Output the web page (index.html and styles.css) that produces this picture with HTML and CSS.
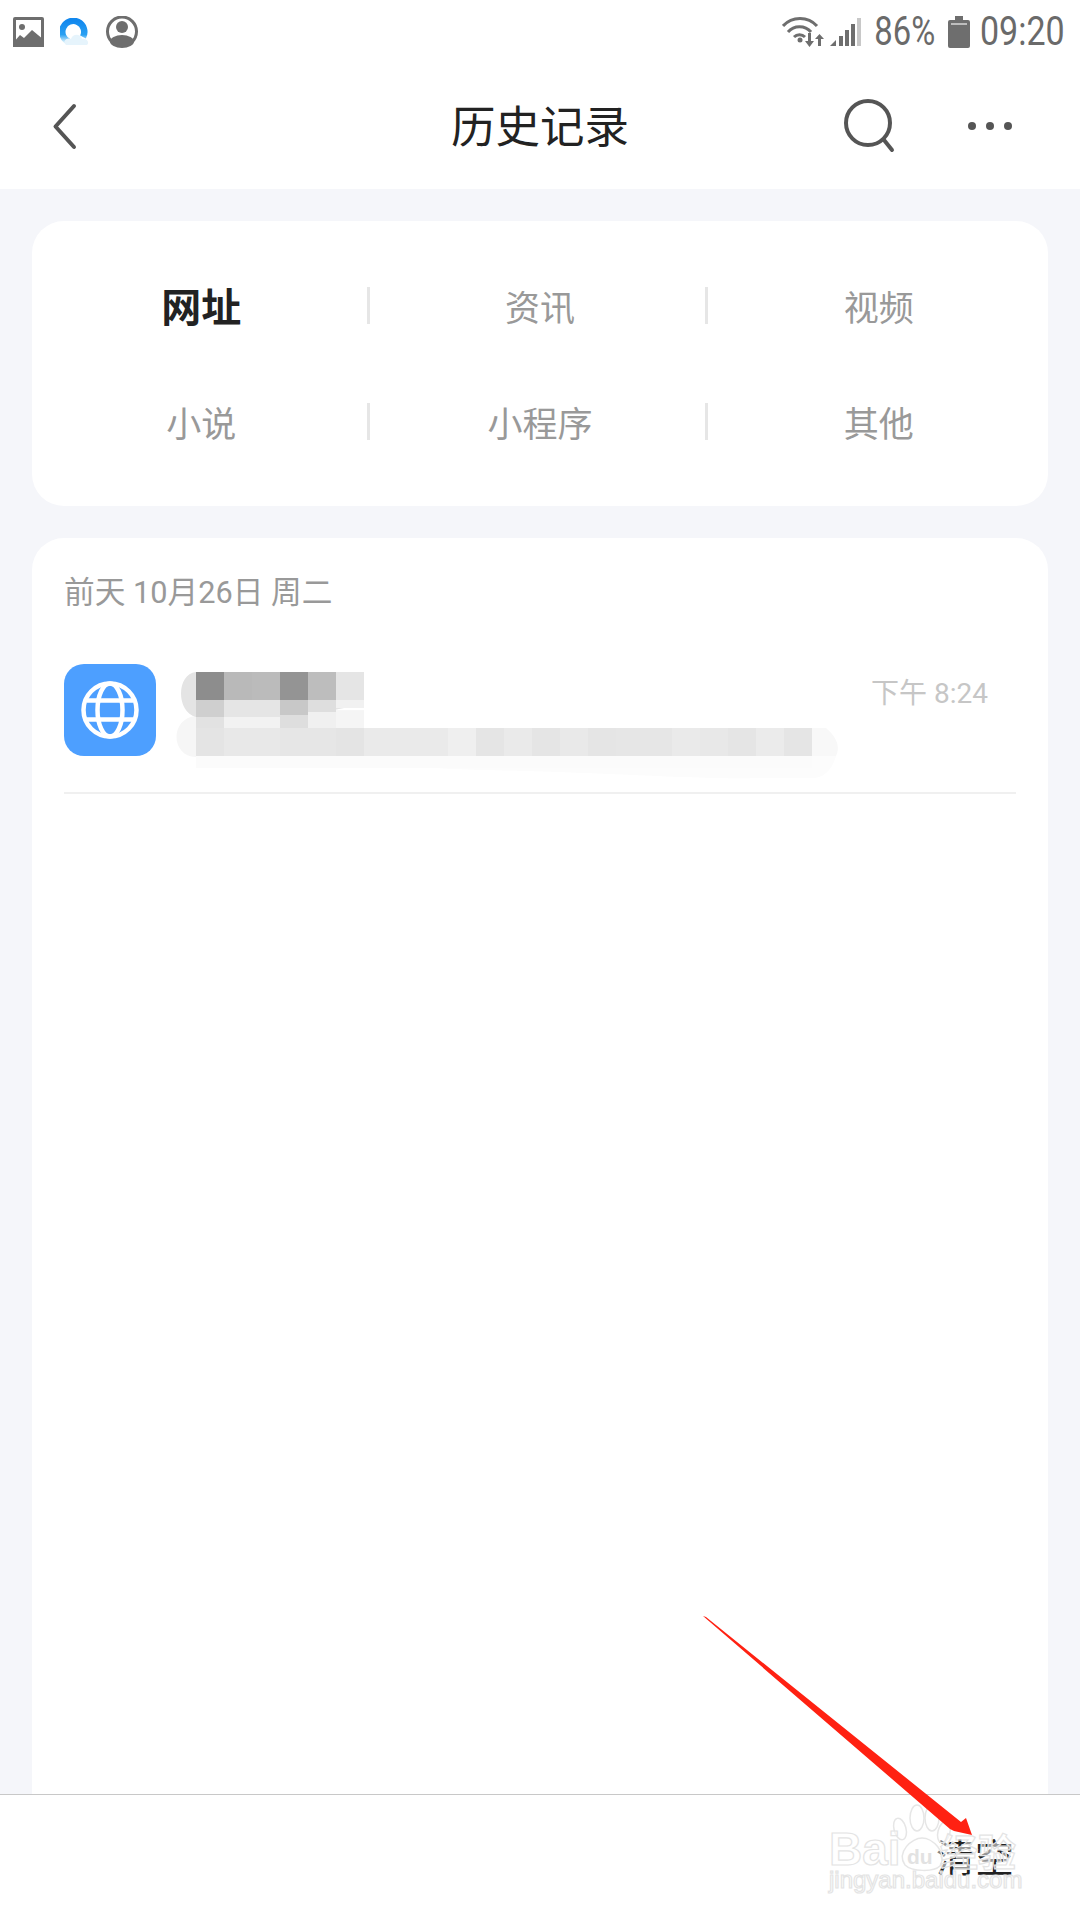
FILE: index.html
```html
<!DOCTYPE html>
<html lang="zh-CN">
<head>
<meta charset="utf-8">
<title>历史记录</title>
<link rel="stylesheet" href="styles.css">
</head>
<body>
<div class="page">
  <header class="header">
    <div class="status">
      <div class="status-left">
        <svg width="31" height="30" viewBox="13 17 31 30"><rect x="13" y="17" width="31" height="30" rx="2" fill="#6e6e6e"/><rect x="16" y="20" width="25" height="22" fill="#fff"/><circle cx="22" cy="27" r="3" fill="#6e6e6e"/><path d="M13 43 L20 35 L24 38 L32 30 L44 40 V47 H13 Z" fill="#6e6e6e"/></svg>
        <svg width="30" height="28" viewBox="61 17 30 28"><defs><linearGradient id="ring" x1="0" y1="0" x2="0" y2="1"><stop offset="0" stop-color="#1288ee"/><stop offset=".65" stop-color="#2aa0f2"/><stop offset="1" stop-color="#d8f0fb"/></linearGradient></defs><path d="M84 36 A11 11 0 1 0 70 41" fill="none" stroke="url(#ring)" stroke-width="6.500"/><path d="M67 44 C63 40 68 36 72 38 C74 32 82 33 83 38 C88 37 91 42 88 44 Z" fill="#e6f4fc"/></svg>
        <svg width="32" height="32" viewBox="106 16 32 32"><path d="M112 42 A14.5 14.5 0 1 1 132 42" fill="none" stroke="#6e6e6e" stroke-width="3"/><circle cx="122" cy="27" r="6" fill="#6e6e6e"/><ellipse cx="122" cy="41.500" rx="12" ry="6.500" fill="#6e6e6e"/></svg>
      </div>
      <div class="status-right">
        <svg class="wifi" width="44" height="34" viewBox="783 15 44 34"><g fill="none" stroke="#6e6e6e" stroke-width="3"><path d="M784 26 C793 16 809 16 818 26"/><path d="M789 32 C795 25 806 25 812 32"/><path d="M795 37 C798 34 803 34 806 37"/></g><circle cx="801" cy="40" r="2.500" fill="#6e6e6e"/><path d="M809 33 H812 V41 H815 L810.500 47 L806 41 H809 Z M819 46 H822 V39 H825 L820.500 34 L816 39 H819 Z" fill="#6e6e6e"/></svg>
        <svg width="32" height="30" viewBox="831 19 32 30"><path d="M831 48 L837 42 V48 Z" fill="#6e6e6e"/><rect x="840" y="38" width="4" height="10" fill="#6e6e6e"/><rect x="846" y="32" width="4" height="16" fill="#6e6e6e"/><rect x="852" y="26" width="4" height="22" fill="#6e6e6e"/><rect x="858" y="20" width="4" height="28" fill="#c8c8c8"/></svg>
        <span class="status-text pct"><span class="condensed">86%</span></span>
        <svg width="22" height="32" viewBox="948 16 22 32"><path d="M955 16 H963 V20 H968 A2 2 0 0 1 970 22 V46 A2 2 0 0 1 968 48 H950 A2 2 0 0 1 948 46 V22 A2 2 0 0 1 950 20 H955 Z" fill="#6e6e6e"/><rect x="951" y="23" width="16" height="2" fill="#bdbdbd"/></svg>
        <span class="status-text clock"><span class="condensed">09:20</span></span>
      </div>
    </div>
    <nav class="nav">
      <div class="nav-left">
        <svg width="26" height="49" viewBox="51 102 26 49"><path d="M74 106 L55.500 126.500 L74 147" fill="none" stroke="#555" stroke-width="4" stroke-linecap="round" stroke-linejoin="round"/></svg>
      </div>
      <h1 class="title">历史记录</h1>
      <div class="nav-right">
        <svg width="54" height="56" viewBox="842 97 54 56"><circle cx="868" cy="122" r="22" fill="none" stroke="#555" stroke-width="4"/><path d="M884 139 L892 149" stroke="#555" stroke-width="4" stroke-linecap="round"/></svg>
        <svg width="46" height="10" viewBox="967 120 46 10"><circle cx="972" cy="125" r="4" fill="#555"/><circle cx="990" cy="125" r="4" fill="#555"/><circle cx="1008" cy="125" r="4" fill="#555"/></svg>
      </div>
    </nav>
  </header>

  <main class="main">
    <section class="card tabs">
      <div class="tab tab-active">网址</div>
      <div class="tab tab-sep">资讯</div>
      <div class="tab tab-sep">视频</div>
      <div class="tab">小说</div>
      <div class="tab tab-sep">小程序</div>
      <div class="tab tab-sep">其他</div>
    </section>

    <section class="card history">
      <div class="date">前天 10月26日 周二</div>
      <div class="row">
        <div class="app-icon">
          <svg width="64" height="64" viewBox="78 678 64 64"><g fill="none" stroke="#fff" stroke-width="4.500"><circle cx="110" cy="710" r="26.500"/><ellipse cx="110" cy="710" rx="12.500" ry="26.500"/><path d="M87 700.500 H133 M87 719.500 H133"/></g></svg>
        </div>
        <svg class="mosaic" width="665" height="92" viewBox="175 664 665 92">
          <path d="M196 756 V768 H280 C350 765 440 768 480 770 C600 772 700 780 760 778 H812 C824 778 832 770 836 756 Z" fill="#fcfcfc"/>
          <path d="M812 728 H826 C838 738 840 748 836 756 H812 Z" fill="#f8f8f8"/>
          <path d="M196 716 C170 718 170 756 196 757 H364 V710 H240 Z" fill="#f6f6f6"/>
          <path d="M196 672 C176 674 176 712 196 717 C230 722 290 718 320 714 C340 708 350 707 364 705 V672 Z" fill="#e4e4e4"/>
          <g>
            <rect x="196" y="672" width="28" height="28" fill="#8d8d8d"/><rect x="224" y="672" width="28" height="28" fill="#b9b9b9"/><rect x="252" y="672" width="28" height="28" fill="#bbb"/><rect x="280" y="672" width="28" height="28" fill="#949494"/><rect x="308" y="672" width="28" height="28" fill="#bdbdbd"/><rect x="336" y="672" width="28" height="28" fill="#e5e5e5"/>
            <rect x="196" y="700" width="28" height="17" fill="#cfcfcf"/><rect x="224" y="700" width="56" height="17" fill="#e5e5e5"/><rect x="280" y="700" width="28" height="15" fill="#c8c8c8"/><rect x="308" y="700" width="28" height="12" fill="#dedede"/><rect x="336" y="700" width="28" height="8" fill="#f1f1f1"/>
            <rect x="196" y="717" width="28" height="11" fill="#e2e2e2"/><rect x="224" y="717" width="56" height="11" fill="#f2f2f2"/><rect x="280" y="715" width="28" height="13" fill="#dedede"/><rect x="308" y="712" width="28" height="16" fill="#f0f0f0"/><rect x="336" y="711" width="28" height="17" fill="#f5f5f5"/>
            <rect x="196" y="728" width="28" height="28" fill="#e4e4e4"/><rect x="224" y="728" width="56" height="28" fill="#e8e8e8"/><rect x="280" y="728" width="56" height="28" fill="#e6e6e6"/><rect x="336" y="728" width="28" height="28" fill="#e4e4e4"/><rect x="364" y="728" width="84" height="28" fill="#eaeaea"/><rect x="448" y="728" width="28" height="28" fill="#efefef"/><rect x="476" y="728" width="28" height="28" fill="#e5e5e5"/><rect x="504" y="728" width="28" height="28" fill="#eaeaea"/><rect x="532" y="728" width="28" height="28" fill="#e5e5e5"/><rect x="560" y="728" width="28" height="28" fill="#e9e9e9"/><rect x="588" y="728" width="28" height="28" fill="#e5e5e5"/><rect x="616" y="728" width="56" height="28" fill="#e6e6e6"/><rect x="672" y="728" width="28" height="28" fill="#eaeaea"/><rect x="700" y="728" width="28" height="28" fill="#e8e8e8"/><rect x="728" y="728" width="28" height="28" fill="#e5e5e5"/><rect x="756" y="728" width="28" height="28" fill="#ebebeb"/><rect x="784" y="728" width="28" height="28" fill="#e5e5e5"/>
            <rect x="196" y="756" width="616" height="12" fill="#fbfbfb"/>
          </g>
        </svg>
        <span class="time">下午 8:24</span>
      </div>
    </section>
  </main>

  <footer class="bottom">
    <span class="clear">清空</span>
  </footer>

  <svg class="annot" width="1080" height="1920" viewBox="0 0 1080 1920">
    <g class="paw">
      <ellipse cx="900" cy="1829" rx="6" ry="11" transform="rotate(-15 900 1829)"/>
      <ellipse cx="917" cy="1818" rx="7" ry="13"/>
      <ellipse cx="932" cy="1818" rx="7" ry="13"/>
      <ellipse cx="944" cy="1832" rx="6" ry="11" transform="rotate(15 944 1832)"/>
      <path d="M905 1865 C896 1852 912 1838 922 1838 C932 1838 948 1852 940 1866 C934 1872 912 1872 905 1865 Z"/>
    </g>
    <text class="wm wm-big" x="829" y="1865">Bai</text>
    <text class="wm-du" x="907" y="1864">du</text>
    <text class="wm wm-cn" x="940" y="1866">经验</text>
    <text class="wm wm-url" x="829" y="1888">jingyan.baidu.com</text>
    <polygon class="arrow" points="703,1616 706,1617 961,1822 966,1818 972,1835 954,1831 950,1829"/>
  </svg>
</div>
</body>
</html>
```

FILE: styles.css
```css
* { box-sizing: border-box; }
html, body { margin: 0; padding: 0; }
body {
  width: 1080px;
  height: 1920px;
  font-family: Roboto, "Noto Sans CJK SC", sans-serif;
  background: #fff;
  overflow: hidden;
}
svg { display: block; flex: none; }

.page {
  position: relative;
  width: 1080px;
  height: 1920px;
  display: flex;
  flex-direction: column;
}

.header { height: 189px; background: #fff; flex: none; }

.status {
  height: 62px;
  display: flex;
  justify-content: space-between;
  align-items: center;
  padding: 2px 15px 0 13px;
}
.status-left { display: flex; align-items: center; gap: 16px; }
.status-right { display: flex; align-items: center; }
.wifi { margin-right: 4px; }
.status-text {
  display: flex;
  justify-content: flex-end;
  white-space: nowrap;
  font-size: 40px;
  line-height: 44px;
  color: #6a6a6a;
}
.condensed { display: block; flex: none; transform-origin: right center; }
.pct { width: 60px; margin: 0 13px; }
.pct .condensed { transform: scaleX(0.82); }
.clock { width: 83px; margin-left: 12px; }
.clock .condensed { transform: scaleX(0.85); }

.nav {
  height: 127px;
  display: grid;
  grid-template-columns: 1fr auto 1fr;
  align-items: center;
  padding: 0 51px;
}
.nav-left { display: flex; margin-top: 2px; }
.title {
  margin: 0;
  padding-top: 5px;
  font-size: 44.500px;
  line-height: 60px;
  font-weight: 400;
  color: #222;
}
.nav-right {
  display: flex;
  justify-content: flex-end;
  align-items: center;
  gap: 71px;
  margin-right: 16px;
}

.main {
  flex: 1;
  min-height: 0;
  background: #f5f6fa;
  padding: 32px 32px 0;
  display: flex;
  flex-direction: column;
  gap: 32px;
}
.card { background: #fff; border-radius: 32px; }

.tabs {
  flex: none;
  height: 285px;
  padding: 26px 0;
  display: grid;
  grid-template-columns: repeat(3, 1fr);
  grid-auto-rows: 116px;
}
.tab {
  position: relative;
  display: flex;
  justify-content: center;
  align-items: center;
  font-size: 35px;
  color: #999;
}
.tab-active { font-size: 40px; font-weight: 700; color: #222; }
.tab-sep::before {
  content: "";
  position: absolute;
  left: -4px;
  top: 40px;
  width: 3px;
  height: 37px;
  background: #e6e6e6;
}

.history {
  flex: 1;
  min-height: 0;
  padding: 38px 32px 0;
  border-radius: 32px 32px 0 0;
}
.date { font-size: 30.700px; line-height: 34px; color: #999; }
.row {
  display: flex;
  align-items: flex-start;
  margin-top: 54px;
  padding-bottom: 36px;
  border-bottom: 2px solid #f0f0f0;
}
.app-icon {
  width: 92px;
  height: 92px;
  flex: none;
  border-radius: 20px;
  background: #4d9fff;
  display: flex;
  justify-content: center;
  align-items: center;
}
.mosaic { margin-left: 19px; overflow: visible; }
.time {
  margin-left: 31px;
  margin-top: 13px;
  font-size: 28px;
  line-height: 34px;
  color: #c6c6c6;
  white-space: nowrap;
}

.bottom {
  flex: none;
  height: 126px;
  background: #fff;
  border-top: 1px solid #c8c8c8;
  display: flex;
  justify-content: flex-end;
  padding: 39px 66px 0 0;
}
.clear { font-size: 39px; line-height: 50px; color: #222; }

.annot { position: absolute; left: 0; top: 0; pointer-events: none; }
.arrow { fill: #ff2112; }
.paw { fill: rgba(255, 255, 255, 0.45); stroke: #e6e6e6; stroke-width: 1.500; }
.wm {
  fill: rgba(255, 255, 255, 0.55);
  stroke: #e4e4e4;
  stroke-width: 1.200;
  font-family: "Liberation Sans", "Noto Sans CJK SC", sans-serif;
}
.wm-big { font-size: 46px; font-weight: 700; }
.wm-cn { font-size: 38px; font-weight: 700; }
.wm-url { font-size: 24px; }
.wm-du { fill: #e2e2e2; font-family: "Liberation Sans", sans-serif; font-size: 21px; font-weight: 700; }
```
